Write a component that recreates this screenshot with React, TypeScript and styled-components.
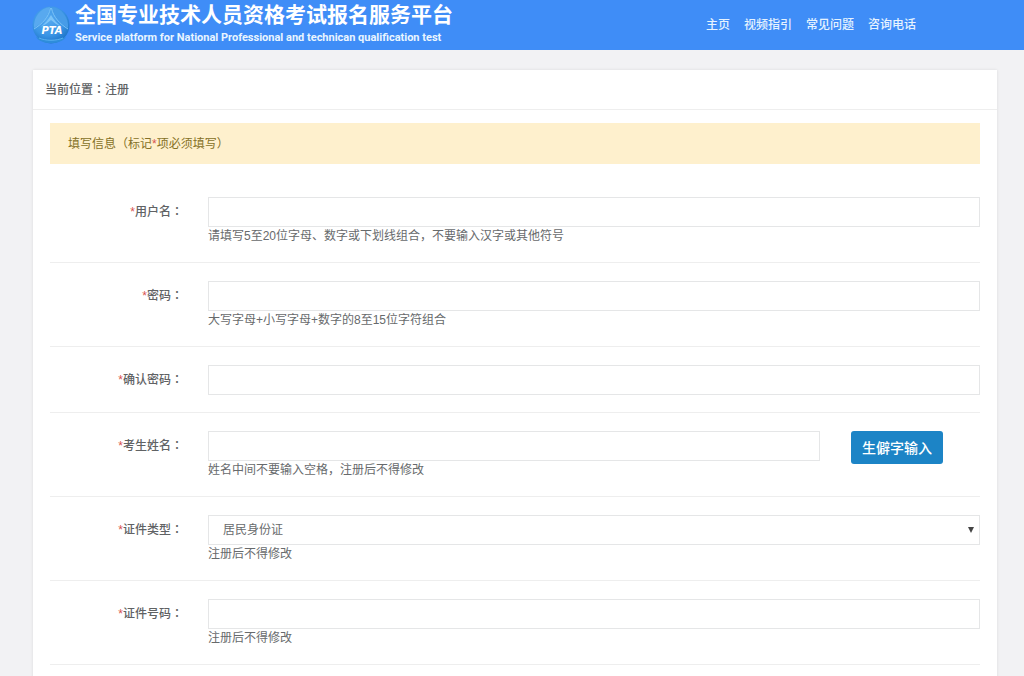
import styled, { createGlobalStyle } from "styled-components";

const GlobalStyle = createGlobalStyle`
  *, *::before, *::after { box-sizing: border-box; }
  body {
    margin: 0;
    background: #f2f2f4;
    color: #676a6c;
    font-family: "Liberation Sans", "Noto Sans CJK SC", sans-serif;
    font-size: 12px;
    line-height: 18px;
  }
`;

const TopBar = styled.header`
  display: flex;
  align-items: center;
  justify-content: space-between;
  height: 50px;
  padding: 0 108px 0 32px;
  background: #3f8df7;
  color: #fff;
`;

const Brand = styled.a`
  display: flex;
  align-items: center;
  gap: 5px;
  color: inherit;
  text-decoration: none;
`;

const BrandText = styled.span`
  display: flex;
  flex-direction: column;
  padding-bottom: 2px;
  white-space: nowrap;
`;

const BrandTitle = styled.span`
  font-size: 21px;
  line-height: 28px;
  font-weight: 700;
`;

const BrandSubtitle = styled.span`
  font-family: Roboto, "Liberation Sans", sans-serif;
  font-size: 11px;
  line-height: 18px;
  font-weight: 700;
  color: #e9f5ff;
`;

const Nav = styled.nav`
  display: flex;
  gap: 14px;
`;

const NavLink = styled.a`
  color: #e6f3ff;
  font-weight: 500;
  text-decoration: none;
  white-space: nowrap;
`;

const Card = styled.main`
  margin: 20px 27px 0 33px;
  background: #fff;
  box-shadow: 0 0 3px rgba(0, 0, 0, 0.1);
`;

const CardHeader = styled.div`
  padding: 11px 12px 10px;
  border-bottom: 1px solid #eeeeee;
  color: #606264;
  font-weight: 500;
`;

const CardBody = styled.div`
  padding: 13px 17px;
`;

const Notice = styled.p`
  margin: 0 0 15px;
  padding: 12px 18px 11px;
  background: #fef0cd;
  color: #857026;
`;

const Star = styled.span`
  color: #d9534f;
`;

const Colon = styled.span`
  font-family: "Noto Sans CJK TC", sans-serif;
  line-height: 0;
`;

const Row = styled.div`
  display: grid;
  grid-template-columns: 133px minmax(0, 1fr);
  column-gap: 25px;
  padding: 18px 0 17px;
  border-bottom: 1px solid #eeeeee;
`;

const Label = styled.label`
  line-height: 30px;
  text-align: right;
  color: #606264;
  font-weight: 500;
`;

const Field = styled.div<{ $withAction?: boolean }>`
  display: grid;
  grid-template-columns: ${(p) => (p.$withAction ? "minmax(0, 1fr) 129px" : "minmax(0, 1fr)")};
  column-gap: 31px;
  align-items: start;
`;

const Control = styled.div`
  display: grid;
  position: relative;
`;

const Input = styled.input`
  width: 100%;
  height: 30px;
  padding: 0 14px;
  border: 1px solid #e5e6e7;
  border-radius: 0;
  background: #fff;
  color: inherit;
  font: inherit;
`;

const Select = styled.select`
  width: 100%;
  height: 30px;
  padding: 0 14px;
  border: 1px solid #e5e6e7;
  border-radius: 0;
  background: #fff;
  color: inherit;
  font: inherit;
  appearance: none;
`;

const Arrow = styled.svg`
  position: absolute;
  top: 12px;
  right: 6px;
  pointer-events: none;
`;

const Hint = styled.span`
  line-height: 18px;
`;

const ActionButton = styled.button`
  justify-self: start;
  height: 33px;
  padding: 0 11px;
  border: 0;
  border-radius: 3px;
  background: #1c84c6;
  color: #fff;
  font: inherit;
  font-size: 14px;
  font-weight: 500;
  white-space: nowrap;
`;

function Logo() {
  return (
    <svg width="38" height="38" viewBox="0 0 38 38" aria-hidden="true">
      <defs>
        <radialGradient id="globe" cx="0.42" cy="0.35" r="0.7">
          <stop offset="0" stopColor="#56aaf0" />
          <stop offset="0.6" stopColor="#3b96e6" />
          <stop offset="1" stopColor="#1a70c4" />
        </radialGradient>
      </defs>
      <circle cx="19" cy="19" r="18.5" fill="url(#globe)" />
      <path d="M18 1C17 10 10 17 2 22C1 12 8 2 18 1Z" fill="#58a9ef" />
      <path d="M20 1C21 10 28 17 36 22C37 12 30 2 20 1Z" fill="#479ce8" />
      <path d="M18.500 2C17 11 10 18 2 23M19.500 2C21 11 28 18 36 23" fill="none" stroke="#7cc3f7" strokeWidth="1" />
      <path d="M8 21C13 18 16 14 19 9C22 14 25 18 30 21L24 18L19 14L14 18Z" fill="#7cc4f8" />
      <path d="M4 31C12 35 26 35 34 31C29 39 9 39 4 31Z" fill="#2e8ddb" />
      <path d="M7 32C14 35 24 35 31 32" fill="none" stroke="#58b0f0" strokeWidth="1" />
      <text
        x="20"
        y="28"
        textAnchor="middle"
        fill="#fff"
        fontFamily="DejaVu Sans, sans-serif"
        fontSize="10"
        fontStyle="italic"
        fontWeight="700"
      >
        PTA
      </text>
    </svg>
  );
}

type FieldSpec = {
  id: string;
  label: string;
  type?: string;
  hint?: string;
  options?: string[];
  action?: string;
};

const fields: FieldSpec[] = [
  { id: "username", label: "用户名", hint: "请填写5至20位字母、数字或下划线组合，不要输入汉字或其他符号" },
  { id: "password", label: "密码", type: "password", hint: "大写字母+小写字母+数字的8至15位字符组合" },
  { id: "confirm", label: "确认密码", type: "password" },
  { id: "realname", label: "考生姓名", hint: "姓名中间不要输入空格，注册后不得修改", action: "生僻字输入" },
  { id: "idtype", label: "证件类型", options: ["居民身份证"], hint: "注册后不得修改" },
  { id: "idnumber", label: "证件号码", hint: "注册后不得修改" },
];

const links = ["主页", "视频指引", "常见问题", "咨询电话"];

function FormRow({ id, label, type = "text", hint, options, action }: FieldSpec) {
  return (
    <Row>
      <Label htmlFor={id}>
        <Star>*</Star>
        {label}
        <Colon>：</Colon>
      </Label>
      <Field $withAction={Boolean(action)}>
        <Control>
          {options ? (
            <>
              <Select id={id}>
                {options.map((o) => (
                  <option key={o}>{o}</option>
                ))}
              </Select>
              <Arrow width="6" height="6" viewBox="0 0 6 6" aria-hidden="true">
                <path d="M0 0H6L3 6Z" fill="#444" />
              </Arrow>
            </>
          ) : (
            <Input id={id} type={type} />
          )}
          {hint && <Hint>{hint}</Hint>}
        </Control>
        {action && <ActionButton type="button">{action}</ActionButton>}
      </Field>
    </Row>
  );
}

export default function App() {
  return (
    <>
      <GlobalStyle />
      <TopBar>
        <Brand href="#">
          <Logo />
          <BrandText>
            <BrandTitle>全国专业技术人员资格考试报名服务平台</BrandTitle>
            <BrandSubtitle>
              Service platform for National Professional and technican qualification test
            </BrandSubtitle>
          </BrandText>
        </Brand>
        <Nav>
          {links.map((l) => (
            <NavLink key={l} href="#">
              {l}
            </NavLink>
          ))}
        </Nav>
      </TopBar>
      <Card>
        <CardHeader>
          当前位置<Colon>：</Colon>注册
        </CardHeader>
        <CardBody>
          <Notice>
            填写信息（标记<Star>*</Star>项必须填写）
          </Notice>
          <form>
            {fields.map((f) => (
              <FormRow key={f.id} {...f} />
            ))}
          </form>
        </CardBody>
      </Card>
    </>
  );
}
